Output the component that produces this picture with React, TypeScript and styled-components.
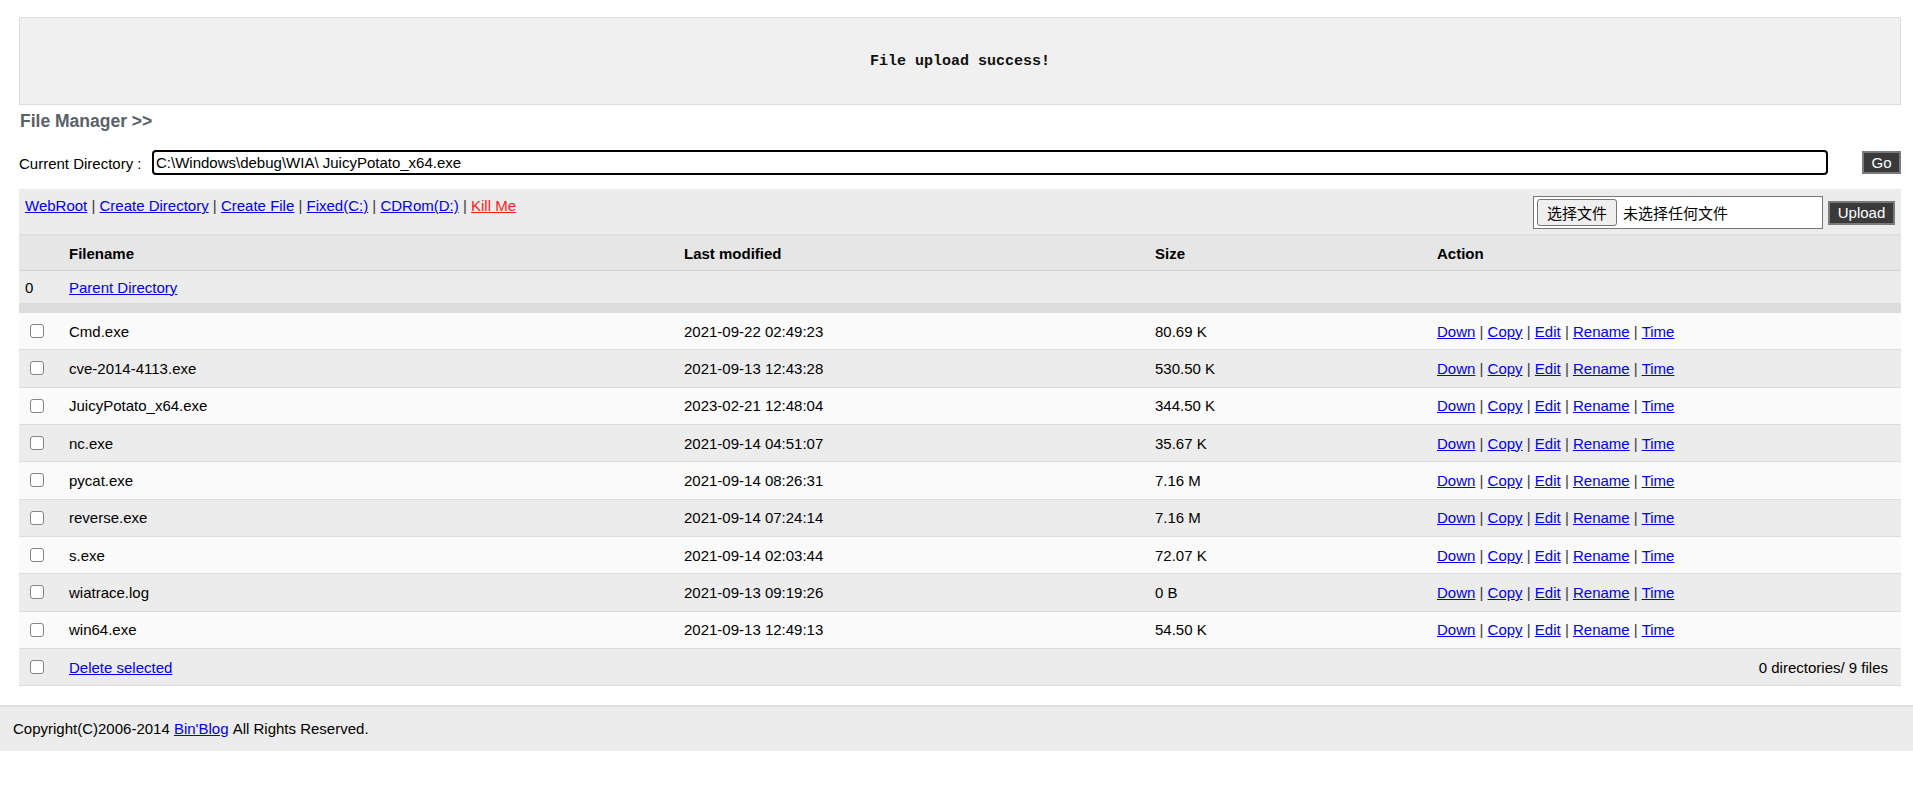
import React from "react";
import styled, { createGlobalStyle } from "styled-components";

const GlobalStyle = createGlobalStyle`
  html, body {
    margin: 0;
    padding: 0;
    background: #ffffff;
  }
  body {
    font-family: "Liberation Sans", Arial, sans-serif;
    font-size: 15px;
    color: #000;
  }
`;

const Page = styled.div`
  width: 100%;
`;

const Main = styled.div`
  padding: 17px 12px 0 19px;
`;

const Notice = styled.div`
  height: 88px;
  box-sizing: border-box;
  border: 1px solid #dddddd;
  background: #f0f0f0;
  display: flex;
  align-items: center;
  justify-content: center;
  font-family: "Liberation Mono", "Courier New", monospace;
  font-weight: bold;
  font-size: 15px;
  color: #111;
`;

const Title = styled.div`
  margin-top: 5px;
  height: 22px;
  line-height: 22px;
  font-size: 17.5px;
  font-weight: bold;
  color: #5a6169;
  padding-left: 1px;
`;

const DirRow = styled.div`
  margin-top: 18px;
  height: 25px;
  display: flex;
  align-items: center;
`;

const DirLabel = styled.span`
  width: 133px;
  flex: none;
  font-size: 15px;
  padding-top: 1px;
`;

const PathInput = styled.input`
  flex: 1;
  min-width: 0;
  height: 25px;
  box-sizing: border-box;
  border: 2px solid #000;
  border-radius: 4px;
  padding: 0 2px;
  margin: 0 34px 0 0;
  font-family: "Liberation Sans", Arial, sans-serif;
  font-size: 15px;
  color: #000;
  background: #fff;
  outline: none;
`;

const DarkButton = styled.button<{ $w: number; $h: number }>`
  width: ${(p) => p.$w}px;
  height: ${(p) => p.$h}px;
  flex: none;
  box-sizing: border-box;
  border: 2px solid #7a7a7a;
  background: #3a3a3a;
  color: #fff;
  font-family: "Liberation Sans", Arial, sans-serif;
  font-size: 15px;
  padding: 0;
  margin: 0;
  cursor: pointer;
`;

const Toolbar = styled.div`
  margin-top: 14px;
  height: 47px;
  box-sizing: border-box;
  background: #ececec;
  border-bottom: 2px solid #e0e0e0;
  display: flex;
  justify-content: space-between;
  align-items: flex-start;
  padding: 0 6px 0 6px;
`;

const NavLinks = styled.div`
  padding-top: 8px;
  line-height: 18px;
  color: #333;
`;

const Link = styled.a<{ $danger?: boolean }>`
  color: ${(p) => (p.$danger ? "#ff1a1a" : "#0000ee")};
  text-decoration: underline;
  cursor: pointer;
`;

const Sep = styled.span`
  color: #3a3a3a;
`;

const UploadForm = styled.div`
  margin-top: 7px;
  display: flex;
  align-items: center;
  gap: 5px;
`;

const FilePicker = styled.div`
  width: 290px;
  height: 33px;
  box-sizing: border-box;
  border: 1px solid #767676;
  background: #fff;
  display: flex;
  align-items: center;
  padding-left: 3px;
  gap: 6px;
  font-family: "Liberation Sans", "Noto Sans CJK SC", sans-serif;
  font-size: 15px;
`;

const PickButton = styled.span`
  height: 27px;
  box-sizing: border-box;
  border: 1px solid #767676;
  border-radius: 3px;
  background: #efefef;
  padding: 0 9px;
  display: flex;
  align-items: center;
  font-family: "Noto Sans CJK SC", sans-serif;
  font-size: 15px;
  color: #000;
`;

const PickText = styled.span`
  font-family: "Noto Sans CJK SC", sans-serif;
  font-size: 15px;
  color: #000;
`;

const FileTable = styled.div`
  width: 100%;
`;

const Row = styled.div<{ $bg: string; $h: string; $line?: string }>`
  display: grid;
  grid-template-columns: 50px 615px 471px 282px 1fr;
  align-items: center;
  height: ${(p) => p.$h};
  box-sizing: border-box;
  background: ${(p) => p.$bg};
  border-bottom: ${(p) => (p.$line ? `1px solid ${p.$line}` : "none")};
`;

const HeadCell = styled.div`
  font-weight: bold;
  font-size: 15px;
`;

const Cell = styled.div`
  font-size: 15px;
  white-space: nowrap;
`;

const IndexCell = styled.div`
  padding-left: 6px;
  font-size: 15px;
`;

const CheckCell = styled.div`
  display: flex;
  align-items: center;
  padding-left: 11px;
`;

const Check = styled.input`
  appearance: none;
  -webkit-appearance: none;
  width: 14px;
  height: 14px;
  margin: 0;
  box-sizing: border-box;
  border: 1.5px solid #858585;
  border-radius: 3px;
  background: #fff;
`;

const Spacer = styled.div`
  height: 10px;
  background: #dcdcdc;
`;

const Summary = styled.div`
  grid-column: 3 / 6;
  text-align: right;
  padding-right: 13px;
  font-size: 15px;
`;

const Footer = styled.div`
  margin-top: 19px;
  height: 46px;
  box-sizing: border-box;
  border-top: 2px solid #dedede;
  background: #ececec;
  display: flex;
  align-items: center;
  padding-left: 13px;
  font-size: 15px;
  padding-bottom: 2px;
`;

type FileItem = { name: string; time: string; size: string };

const files: FileItem[] = [
  { name: "Cmd.exe", time: "2021-09-22 02:49:23", size: "80.69 K" },
  { name: "cve-2014-4113.exe", time: "2021-09-13 12:43:28", size: "530.50 K" },
  { name: "JuicyPotato_x64.exe", time: "2023-02-21 12:48:04", size: "344.50 K" },
  { name: "nc.exe", time: "2021-09-14 04:51:07", size: "35.67 K" },
  { name: "pycat.exe", time: "2021-09-14 08:26:31", size: "7.16 M" },
  { name: "reverse.exe", time: "2021-09-14 07:24:14", size: "7.16 M" },
  { name: "s.exe", time: "2021-09-14 02:03:44", size: "72.07 K" },
  { name: "wiatrace.log", time: "2021-09-13 09:19:26", size: "0 B" },
  { name: "win64.exe", time: "2021-09-13 12:49:13", size: "54.50 K" },
];

const actions = ["Down", "Copy", "Edit", "Rename", "Time"];
const nav = ["WebRoot", "Create Directory", "Create File", "Fixed(C:)", "CDRom(D:)"];

const ROW_H = "37.33px";

export default function App() {
  return (
    <Page>
      <GlobalStyle />
      <Main>
        <Notice>File upload success!</Notice>
        <Title>File Manager &gt;&gt;</Title>
        <DirRow>
          <DirLabel>Current Directory :</DirLabel>
          <PathInput defaultValue="C:\Windows\debug\WIA\ JuicyPotato_x64.exe" />
          <DarkButton $w={39} $h={23}>Go</DarkButton>
        </DirRow>
        <Toolbar>
          <NavLinks>
            {nav.map((n) => (
              <React.Fragment key={n}>
                <Link>{n}</Link>
                <Sep> | </Sep>
              </React.Fragment>
            ))}
            <Link $danger>Kill Me</Link>
          </NavLinks>
          <UploadForm>
            <FilePicker>
              <PickButton>选择文件</PickButton>
              <PickText>未选择任何文件</PickText>
            </FilePicker>
            <DarkButton $w={67} $h={24}>Upload</DarkButton>
          </UploadForm>
        </Toolbar>
        <FileTable>
          <Row $bg="#e6e6e6" $h="35px" $line="#d2d2d2">
            <div />
            <HeadCell>Filename</HeadCell>
            <HeadCell>Last modified</HeadCell>
            <HeadCell>Size</HeadCell>
            <HeadCell>Action</HeadCell>
          </Row>
          <Row $bg="#ececec" $h="32px">
            <IndexCell>0</IndexCell>
            <Cell>
              <Link>Parent Directory</Link>
            </Cell>
          </Row>
          <Spacer />
          {files.map((f, i) => (
            <Row key={f.name} $bg={i % 2 === 0 ? "#fafafa" : "#ececec"} $h={ROW_H} $line="#dcdcdc">
              <CheckCell>
                <Check type="checkbox" />
              </CheckCell>
              <Cell>{f.name}</Cell>
              <Cell>{f.time}</Cell>
              <Cell>{f.size}</Cell>
              <Cell>
                {actions.map((a, j) => (
                  <React.Fragment key={a}>
                    {j > 0 && <Sep> | </Sep>}
                    <Link>{a}</Link>
                  </React.Fragment>
                ))}
              </Cell>
            </Row>
          ))}
          <Row $bg="#ececec" $h={ROW_H} $line="#dcdcdc">
            <CheckCell>
              <Check type="checkbox" />
            </CheckCell>
            <Cell>
              <Link>Delete selected</Link>
            </Cell>
            <Summary>0 directories/ 9 files</Summary>
          </Row>
        </FileTable>
      </Main>
      <Footer>
        Copyright(C)2006-2014&nbsp;<Link>Bin'Blog</Link>&nbsp;All Rights Reserved.
      </Footer>
    </Page>
  );
}
